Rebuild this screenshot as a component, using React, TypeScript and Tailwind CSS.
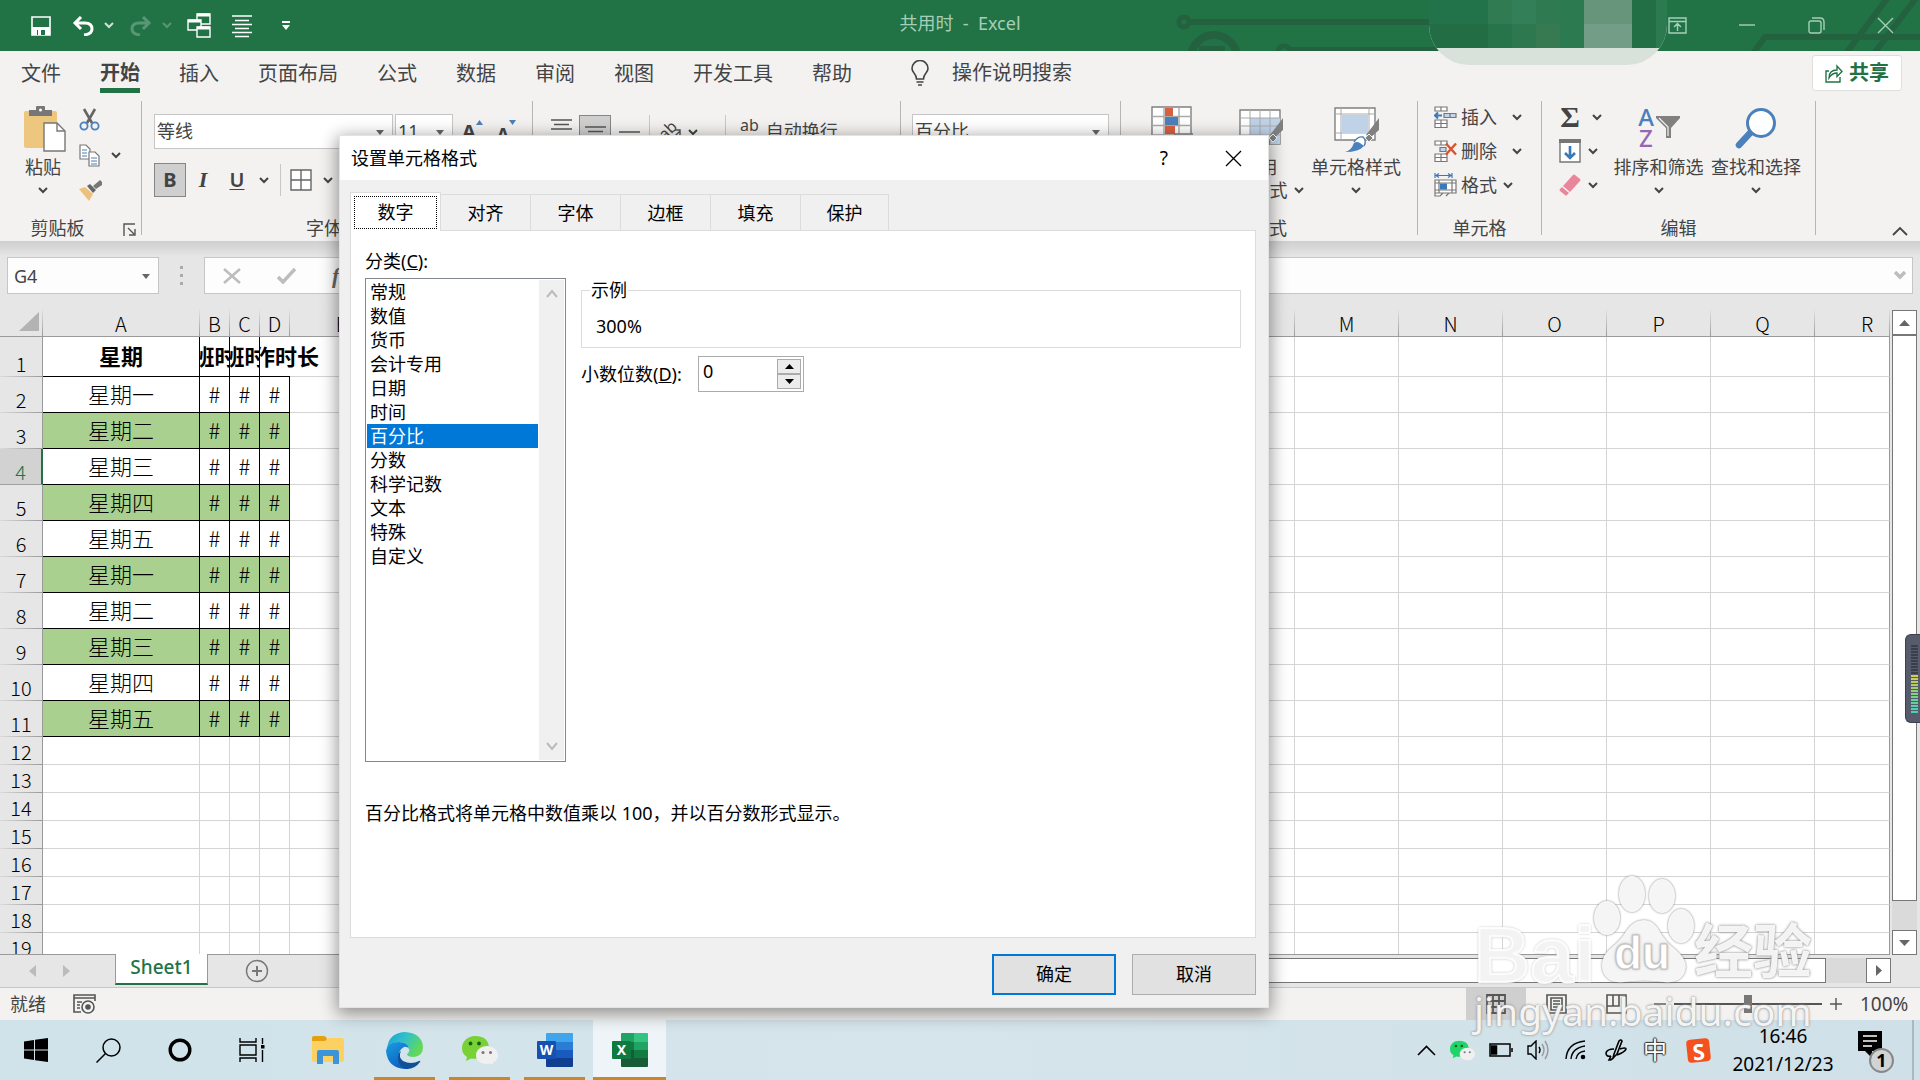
import { useState } from "react";
import type { ReactNode } from "react";

const tabs = ["文件", "开始", "插入", "页面布局", "公式", "数据", "审阅", "视图", "开发工具", "帮助"];
const dialogTabs = ["数字", "对齐", "字体", "边框", "填充", "保护"];
const categories = [
  "常规",
  "数值",
  "货币",
  "会计专用",
  "日期",
  "时间",
  "百分比",
  "分数",
  "科学记数",
  "文本",
  "特殊",
  "自定义",
];
const days = ["星期一", "星期二", "星期三", "星期四", "星期五", "星期一", "星期二", "星期三", "星期四", "星期五"];
const columns = ["A", "B", "C", "D", "E", "F", "G", "H", "I", "J", "K", "L", "M", "N", "O", "P", "Q", "R"];
const emptyRows = [12, 13, 14, 15, 16, 17, 18, 19];
const meterColors = [
  "#3b3f4c", "#3b3f4c", "#3b3f4c", "#3b3f4c", "#3b3f4c", "#3b3f4c", "#3b3f4c", "#3b3f4c", "#3b3f4c", "#3b3f4c",
  "#d3cf4e", "#c9ce55", "#bdcc5c", "#b0cc63", "#a2cd6b", "#94cf76", "#85d082", "#78d08e", "#6bd19a", "#60d1a4",
  "#56d0ac", "#4fcfb3", "#49ceb9",
];

const colWidth = (name: string) => {
  if (name === "A") return "w-[157px]";
  if ("BCD".includes(name)) return "w-[30px]";
  if ("EMNOPQ".includes(name)) return "w-[104px]";
  if (name === "R") return "w-[75px]";
  return "";
};

const Chevron = ({ className = "text-[#444]" }: { className?: string }) => (
  <svg width="10" height="7" viewBox="0 0 10 7" className={"shrink-0 " + className}>
    <path d="M1 1l4 4 4-4" fill="none" stroke="currentColor" strokeWidth="2" />
  </svg>
);

const Triangle = () => (
  <svg width="8" height="5" viewBox="0 0 8 5" className="pointer-events-none absolute right-2 top-1/2 -mt-0.5">
    <path d="M0 0h8L4 5z" fill="#666" />
  </svg>
);

/* ---------- title bar ---------- */

const TitleBar = () => (
  <header className="relative flex h-[51px] shrink-0 items-center bg-[#217346] text-white">
    <svg className="absolute right-0 top-0" width="760" height="51" viewBox="1160 0 760 51" fill="none" stroke="#24623f">
      <circle cx="1184" cy="22" r="5" strokeWidth="5" />
      <path d="M1191 22h240" strokeWidth="6" />
      <circle cx="1214" cy="58" r="23" strokeWidth="8" />
      <path d="M1199 49h26" strokeWidth="6" />
      <circle cx="1284" cy="52" r="6" strokeWidth="5" />
      <path d="M1288 49h150" strokeWidth="4" />
      <path d="M1754 52l11-15h155M1847 52l42-56M1875 52l45-59" strokeWidth="6" />
    </svg>
    <div className="flex items-center pl-[31px]">
      <button aria-label="保存">
        <svg width="20" height="20" viewBox="0 0 20 20">
          <path d="M1 1h18v18H1z" fill="none" stroke="#fff" strokeWidth="1.6" />
          <path d="M1 11h18v8H1z" fill="#fff" />
          <path d="M6 14h8v5H6z" fill="#217346" />
          <path d="M7 14h3v5H7z" fill="#fff" />
        </svg>
      </button>
      <button aria-label="撤消" className="ml-[21px] flex items-center gap-[10px]">
        <svg width="22" height="20" viewBox="0 0 22 20" fill="none" stroke="#fff" strokeWidth="3">
          <path d="M9 1L3 7l6 6M3 7h10q7 0 7 6 0 5-8 6" />
        </svg>
        <Chevron className="text-[#cfe3d7]" />
      </button>
      <button aria-label="恢复" className="ml-[16px] flex items-center gap-[10px] opacity-25">
        <svg width="22" height="20" viewBox="0 0 22 20" fill="none" stroke="#fff" strokeWidth="3">
          <path d="M13 1l6 6-6 6M19 7H9q-7 0-7 6 0 5 8 6" />
        </svg>
        <Chevron className="text-white" />
      </button>
      <button aria-label="切换窗口" className="ml-[15px]">
        <svg width="24" height="25" viewBox="0 0 24 25" fill="#217346" stroke="#fff" strokeWidth="1.4">
          <path d="M10 1h13v10H10z" />
          <path d="M10 2h13" strokeWidth="3" />
          <path d="M1 7h13v10H1z" />
          <path d="M1 8h13" strokeWidth="3" />
          <path d="M10 14h13v10H10z" />
          <path d="M10 15h13" strokeWidth="3" />
        </svg>
      </button>
      <button aria-label="居中" className="ml-[21px]">
        <svg width="20" height="24" viewBox="0 0 20 24" stroke="#fff" strokeWidth="1.4">
          <path d="M0 2h20M3 6.500h14M0 10.500h20M3 14.500h14M0 18.500h20M3 22.500h14" />
        </svg>
      </button>
      <button aria-label="自定义快速访问工具栏" className="ml-[30px]">
        <svg width="8" height="9" viewBox="0 0 8 9">
          <path d="M0 0h8v2H0zM0 4h8L4 9z" fill="#fff" />
        </svg>
      </button>
    </div>
    <h1 className="absolute inset-x-0 top-[11px] text-center text-[18px] leading-6 text-[#a6cfb8]">
      <span className="whitespace-pre">共用时  -  Excel</span>
    </h1>
    <div className="absolute right-[253px] top-0 z-10 h-[65px] w-[238px] overflow-hidden rounded-b-[40px] bg-[#d8e2db]">
      <div className="grid h-[48px] grid-cols-[59px_24px_24px_24px_24px_48px_24px_11px] grid-rows-2">
        <i className="bg-[#23734a]" /><i className="bg-[#317b52]" /><i className="bg-[#337f57]" /><i className="bg-[#2f7a50]" />
        <i className="bg-[#2b7a50]" /><i className="bg-[#66957b]" /><i className="bg-[#226f45]" /><i className="bg-[#2b7a50]" />
        <i className="bg-[#226d43]" /><i className="bg-[#27734a]" /><i className="bg-[#2e7850]" /><i className="bg-[#377a52]" />
        <i className="bg-[#2b7a50]" /><i className="bg-[#749d87]" /><i className="bg-[#226f45]" /><i className="bg-[#2b7a50]" />
      </div>
    </div>
    <div className="relative ml-auto flex items-center gap-[52px] pr-[26px] text-[#a6cfb8]">
      <button aria-label="功能区显示选项">
        <svg width="19" height="17" viewBox="0 0 19 17" fill="none" stroke="currentColor" strokeWidth="1.400">
          <path d="M1 1h17v15H1zM1 4.500h17M9.500 14V7M6 10l3.500-3.500L13 10" />
        </svg>
      </button>
      <button aria-label="最小化">
        <svg width="17" height="17" viewBox="0 0 17 17" stroke="currentColor" strokeWidth="1.400">
          <path d="M0 8h16" />
        </svg>
      </button>
      <button aria-label="还原">
        <svg width="17" height="17" viewBox="0 0 17 17" fill="none" stroke="currentColor" strokeWidth="1.400">
          <rect x="1" y="4" width="12" height="12" rx="2" />
          <path d="M4 1h8q4 0 4 4v8" />
        </svg>
      </button>
      <button aria-label="关闭">
        <svg width="17" height="17" viewBox="0 0 17 17" stroke="currentColor" strokeWidth="1.400">
          <path d="M1 1l15 15M16 1L1 16" />
        </svg>
      </button>
    </div>
  </header>
);

const RibbonTabs = () => (
  <nav className="flex h-[50px] shrink-0 items-start pl-[21px] pr-[18px] text-[20px] text-[#444]">
    <div className="flex gap-[39px]">
      {tabs.map((tab) => (
        <button
          key={tab}
          className={
            "h-[42px] pt-1 leading-[36px] " +
            (tab === "开始" ? "border-b-5 border-[#217346] font-bold" : "")
          }
        >
          {tab}
        </button>
      ))}
    </div>
    <button className="ml-[59px] flex h-[44px] items-center gap-[23px]">
      <svg width="18" height="26" viewBox="0 0 18 26" fill="none" stroke="#444" strokeWidth="1.600">
        <path d="M5.500 19q0-3-2.500-6Q1 10.500 1 8.500a8 8 0 0 1 16 0q0 2-2 4.500-2.500 3-2.500 6zM5.500 22h7M7 25h4" />
      </svg>
      操作说明搜索
    </button>
    <button className="ml-auto mt-1 flex h-[36px] w-[90px] items-center justify-center gap-[6px] rounded-[3px] border border-[#e1dfdd] bg-white font-bold text-[#217346]">
      <svg width="18" height="19" viewBox="0 0 18 19" fill="none" stroke="currentColor" strokeWidth="1.400">
        <path d="M4 7H1v11h14v-5M4 14q0-8 8-8V2l5 5.500-5 5V9q-5 0-8 5z" />
      </svg>
      共享
    </button>
  </nav>
);

/* ---------- ribbon ---------- */

const Group = ({ label, width, children, launcher }: { label: string; width: string; children: ReactNode; launcher?: boolean }) => (
  <>
    <section className={"flex shrink-0 flex-col " + width}>
      <div className="flex h-[117px]">{children}</div>
      <div className={"relative text-center leading-5 " + (launcher ? "pr-[26px]" : "")}>
        {label}
        {launcher && (
          <button aria-label={label + "设置"} className="absolute right-[5px] top-[5px]">
            <svg width="13" height="13" viewBox="0 0 13 13" fill="none" stroke="#555" strokeWidth="1.400">
              <path d="M1 13V1h11M5 5l6 6M12 6v6H6" />
            </svg>
          </button>
        )}
      </div>
    </section>
    <div className="h-[134px] w-px shrink-0 bg-[#b8b6b4]" />
  </>
);

const BigButton = ({ icon, lines, width }: { icon: ReactNode; lines: string[]; width: string }) => (
  <button className={"flex shrink-0 flex-col items-center pt-[5px] leading-5 " + width}>
    <span className="mb-[5px] h-[46px]">{icon}</span>
    <span className="whitespace-nowrap">{lines[0]}</span>
    <span className="mt-[3px] flex h-5 items-center gap-[6px] whitespace-nowrap">
      {lines[1]}
      <Chevron />
    </span>
  </button>
);

const Brush = () => (
  <>
    <path d="M46 12v12L37 32l-4-3z" fill="#808080" />
    <path d="M36 28l4 4-4 4-4-4z" fill="#808080" stroke="#f3f2f1" />
    <path d="M21 36q4-6 9-5 4 4 1 9" fill="#fff" stroke="#4a80bb" strokeWidth="1.400" />
    <path d="M12 46q6-1 9-9 3-2 6 0l4 3q-5 6-19 6z" fill="#4a80bb" />
  </>
);

const AlignLines = ({ d }: { d: string }) => (
  <svg width="21" height="22" viewBox="0 0 21 22" stroke="#555" strokeWidth="1.400">
    <path d={d} />
  </svg>
);

const ClipboardGroup = () => (
  <Group label="剪贴板" width="w-[141px]" launcher>
    <div className="ml-[19px] flex">
      <BigButton
        width="w-[48px]"
        lines={["粘贴"]}
        icon={
          <svg width="42" height="46" viewBox="0 0 42 46" className="ml-1">
            <rect x="0" y="5" width="33" height="37" rx="2" fill="#eec77e" />
            <path d="M5 10V4h7V1q0-1 1-1h7q1 0 1 1v3h7v6z" fill="#777" />
            <circle cx="16.500" cy="4" r="1.500" fill="#fff" />
            <path d="M20 17h13l8 8v20H20z" fill="#fff" stroke="#777" strokeWidth="1.400" />
            <path d="M33 17v8h8" fill="none" stroke="#777" strokeWidth="1.400" />
          </svg>
        }
      />
    </div>
    <div className="ml-[12px] flex flex-col gap-[13px] pt-[7px]">
      <button aria-label="剪切">
        <svg width="21" height="23" viewBox="0 0 21 23" fill="none">
          <path d="M5 1l8 14M16 1L8 15" stroke="#666" strokeWidth="2.600" />
          <circle cx="5" cy="18" r="3.600" stroke="#4a80bb" strokeWidth="1.800" />
          <circle cx="16" cy="18" r="3.600" stroke="#4a80bb" strokeWidth="1.800" />
        </svg>
      </button>
      <button aria-label="复制" className="flex items-center gap-[11px]">
        <svg width="21" height="23" viewBox="0 0 21 23" fill="#fff" stroke="#777" strokeWidth="1.200">
          <path d="M1 1h6l4 4v10H1z" />
          <path d="M10 8h6l4 4v10H10z" />
          <path d="M3 6h5M3 9h5M3 12h5M12 14h6M12 17h6M12 20h6" stroke="#4a80bb" />
        </svg>
        <Chevron />
      </button>
      <button aria-label="格式刷">
        <svg width="23" height="21" viewBox="0 0 23 21">
          <path d="M0 9l6-2 8 7-4 7z" fill="#eec07d" />
          <path d="M8 6l3-2 6 6-3 3z" fill="#666" />
          <path d="M14 6l7-6 2 2v3l-6 4z" fill="#777" />
        </svg>
      </button>
    </div>
  </Group>
);

const FontGroup = () => (
  <Group label="字体" width="w-[390px]" launcher>
    <div className="pl-[12px] pt-[13px]">
      <div className="flex gap-[2px]">
        <label className="relative h-[35px] w-[239px] border border-[#c6c6c6] bg-white">
          <select aria-label="字体" className="h-full w-full appearance-none px-0.5 text-[18px] text-[#444]">
            <option>等线</option>
          </select>
          <Triangle />
        </label>
        <label className="relative h-[35px] w-[58px] border border-[#c6c6c6] bg-white">
          <select aria-label="字号" className="h-full w-full appearance-none px-0.5 text-[18px] text-[#444]">
            <option>11</option>
          </select>
          <Triangle />
        </label>
        <button aria-label="增大字号" className="ml-[7px] mt-1 flex h-7 text-[20px] font-bold leading-7">
          A
          <svg width="7" height="5" viewBox="0 0 7 5" className="mt-0.5">
            <path d="M0 5h7L3.500 0z" fill="#4a80bb" />
          </svg>
        </button>
        <button aria-label="减小字号" className="ml-[12px] mt-1 flex h-7 text-[18px] font-bold leading-8">
          A
          <svg width="7" height="5" viewBox="0 0 7 5" className="mt-0.5">
            <path d="M0 0h7L3.500 5z" fill="#4a80bb" />
          </svg>
        </button>
      </div>
      <div className="mt-[14px] flex h-[34px] items-center">
        <button className="h-[34px] w-[32px] border border-[#868686] bg-[#cfcfcf] text-[20px] font-bold leading-[28px]">B</button>
        <button className="ml-[10px] w-[14px] font-['Liberation_Serif',serif] text-[22px] font-bold italic leading-[28px]">I</button>
        <button className="ml-[18px] w-[18px] text-[20px] font-semibold leading-[28px] underline decoration-1 underline-offset-2">U</button>
        <button aria-label="下划线样式" className="ml-[13px]"><Chevron /></button>
        <div className="ml-[11px] h-8 w-px bg-[#c9c7c5]" />
        <button aria-label="边框" className="ml-[9px] flex items-center gap-[11px]">
          <svg width="22" height="22" viewBox="0 0 22 22" fill="#fff" stroke="#666" strokeWidth="1.400">
            <path d="M1 1h20v20H1zM11 1v20M1 11h20" />
          </svg>
          <Chevron />
        </button>
      </div>
    </div>
  </Group>
);

const AlignGroup = () => (
  <Group label="对齐方式" width="w-[367px]">
    <div className="flex h-[48px] items-start pl-[12px] pt-[14px]">
      <button aria-label="顶端对齐" className="flex h-[34px] w-[32px] justify-center pt-1"><AlignLines d="M0 1h21M3 5.500h15M0 10h21" /></button>
      <button aria-label="垂直居中" className="ml-[2px] flex h-[34px] w-[32px] items-center justify-center border border-[#868686] bg-[#cfcfcf]"><AlignLines d="M0 6h21M3 10.500h15M0 15h21" /></button>
      <button aria-label="底端对齐" className="ml-[2px] flex h-[34px] w-[32px] items-end justify-center"><AlignLines d="M0 5h21M3 9.500h15M0 14h21" /></button>
      <div className="ml-[4px] h-8 w-px bg-[#c9c7c5]" />
      <button aria-label="方向" className="ml-[10px] flex h-[34px] items-center gap-[8px]">
        <span className="relative block h-6 w-[20px]">
          <span className="absolute -left-0.5 top-0 -rotate-45 text-[16px] leading-5">ab</span>
          <svg className="absolute left-[9px] top-[8px]" width="12" height="14" viewBox="0 0 12 14" fill="none" stroke="#555" strokeWidth="1.500">
            <path d="M1 13L11 3M6 2h5v5" />
          </svg>
        </span>
        <Chevron />
      </button>
      <div className="ml-[27px] h-8 w-px bg-[#c9c7c5]" />
      <button className="ml-[14px] flex h-[34px] items-start gap-[7px] leading-[32px]">
        <span className="text-[16px] leading-5">ab</span>自动换行
      </button>
    </div>
  </Group>
);

const InsertIcon = () => (
  <svg width="23" height="22" viewBox="0 0 23 22" fill="#fff" stroke="#777" strokeWidth="1.200">
    <path d="M1 1h12v4H1zM7 1v4M1 14h12v7.500H1zM7 14v7.500M1 17.500h12" />
    <path d="M10 7.500h12v4H10zM16 7.500v4" fill="#c3d5ea" />
    <path d="M8 9.500H1M4 6.500l-3 3 3 3" fill="none" stroke="#3a79b7" strokeWidth="2" />
  </svg>
);

const DeleteIcon = () => (
  <svg width="23" height="22" viewBox="0 0 23 22" fill="#fff" stroke="#777" strokeWidth="1.200">
    <path d="M1 1h12v4H1zM7 1v4M1 14h12v7.500H1zM7 14v7.500M1 17.500h12" />
    <path d="M6 7.500h6v4H6z" fill="#c3d5ea" />
    <path d="M12 3.500l10 11M22 3.500l-10 11" stroke="#d9532c" strokeWidth="2.400" />
  </svg>
);

const FormatIcon = () => (
  <svg width="23" height="24" viewBox="0 0 23 24" fill="#fff" stroke="#777" strokeWidth="1.200">
    <path d="M1 7h21v13H1zM1 10h21M1 17h21M5 7v13M18 7v13M1 20v3h5l3-3M12 23l3-3" />
    <path d="M6 10.500h7v6H6z" fill="#3a79b7" stroke="none" />
    <path d="M1 0v5M18 0v5M2 2.500h15M5 .5l-3 2 3 2M14 .5l3 2-3 2" fill="none" stroke="#3a79b7" />
  </svg>
);

const Ribbon = () => (
  <div className="flex h-[140px] shrink-0 text-[18px] text-[#444]">
    <ClipboardGroup />
    <FontGroup />
    <AlignGroup />
    <Group label="数字" width="w-[219px]">
      <div className="pl-[11px] pt-[13px]">
        <label className="relative block h-[35px] w-[197px] border border-[#c6c6c6] bg-white">
          <select aria-label="数字格式" className="h-full w-full appearance-none px-0.5 text-[18px] text-[#444]">
            <option>百分比</option>
          </select>
          <Triangle />
        </label>
      </div>
    </Group>
    <Group label="样式" width="w-[296px]">
      <div className="flex pl-[8px]">
        <BigButton
          width="w-[86px]"
          lines={["条件格式"]}
          icon={
            <svg width="42" height="46" viewBox="0 0 42 46" fill="#fff" stroke="#808080" strokeWidth="1.400">
              <path d="M1 1h39v38H1z" />
              <path d="M13 1v38M28 1v38M1 10.500h39M1 19.500h39M1 29h39" stroke="#aaa" />
              <path d="M14 2h8v8h-8zM14 20h10v8H14z" fill="#d9603f" stroke="none" />
              <path d="M14 11h13v8H14zM14 30h5v8h-5z" fill="#4a80bb" stroke="none" />
              <path d="M24 28h20v17H24z" />
            </svg>
          }
        />
        <BigButton
          width="w-[89px]"
          lines={["套用", "表格格式"]}
          icon={
            <svg width="46" height="46" viewBox="0 0 46 46">
              <path d="M3 4h40v34H3z" fill="#fff" stroke="#808080" strokeWidth="1.400" />
              <path d="M13 12h30v26H13z" fill="#bfd2e8" />
              <path d="M3 12h40M3 20h40M3 29h40M13 4v34M23 4v34M33 4v34" stroke="#aaa" />
              <Brush />
            </svg>
          }
        />
        <div className="ml-[6px]">
          <BigButton
            width="w-[92px]"
            lines={["单元格样式"]}
            icon={
              <svg width="46" height="46" viewBox="0 0 46 46">
                <path d="M2 2h40v32H2z" fill="#fff" stroke="#808080" strokeWidth="1.400" />
                <path d="M2 8h40M2 27h40M8 2v32M36 2v32" stroke="#aaa" />
                <path d="M9 9h26v18H9z" fill="#bfd2e8" />
                <Brush />
              </svg>
            }
          />
        </div>
      </div>
    </Group>
    <Group label="单元格" width="w-[123px]">
      <div className="-mt-px pl-[16px]">
        <button className="flex h-[34px] items-center gap-[4px]"><InsertIcon />插入<Chevron className="ml-[11px] text-[#444]" /></button>
        <button className="flex h-[34px] items-center gap-[4px]"><DeleteIcon />删除<Chevron className="ml-[11px] text-[#444]" /></button>
        <button className="flex h-[34px] items-center gap-[4px]"><FormatIcon />格式<Chevron className="ml-[2px] text-[#444]" /></button>
      </div>
    </Group>
    <Group label="编辑" width="w-[273px]">
      <div className="-mt-px w-[71px] pl-[17px]">
        <button aria-label="自动求和" className="flex h-[34px] items-center gap-[11px]">
          <span className="w-[22px] text-center font-['Liberation_Serif',serif] text-[30px] font-bold leading-[34px]">Σ</span>
          <Chevron />
        </button>
        <button aria-label="填充" className="flex h-[34px] items-center gap-[7px]">
          <svg width="22" height="24" viewBox="0 0 22 24">
            <path d="M1 1h20v22H1z" fill="#fff" stroke="#777" strokeWidth="1.400" />
            <path d="M0 0h22v4H0z" fill="#777" />
            <path d="M11 7v12M6 14l5 5 5-5" fill="none" stroke="#3a79b7" strokeWidth="2.600" />
          </svg>
          <Chevron />
        </button>
        <button aria-label="清除" className="flex h-[34px] items-center gap-[7px]">
          <svg width="22" height="22" viewBox="0 0 22 22" fill="#e8879b">
            <path d="M14 1q1-1 2 0l5 4q1 1 0 2L11 18l-7-6z" />
            <path d="M3 13l7 6-2 2q-1 1-2 0l-5-4q-1-1 0-2z" />
          </svg>
          <Chevron />
        </button>
      </div>
      <BigButton
        width="w-[91px]"
        lines={["排序和筛选"]}
        icon={
          <span className="flex">
            <span className="flex w-[17px] flex-col text-center text-[24px] font-medium leading-[21px]">
              <span className="text-[#4a80bb]">A</span>
              <span className="text-[#9467b5]">Z</span>
            </span>
            <svg width="25" height="40" viewBox="0 0 25 40" fill="none">
              <path d="M1 10h24v2l-9 10v10h-5V22L1 12z" fill="#808080" />
              <path d="M4 12l9 9v9" stroke="#f3f2f1" strokeWidth="1.200" />
            </svg>
          </span>
        }
      />
      <div className="ml-[6px]">
        <BigButton
          width="w-[92px]"
          lines={["查找和选择"]}
          icon={
            <svg width="42" height="44" viewBox="0 0 42 44">
              <path d="M16 26L4 39" stroke="#4a80bb" strokeWidth="6.500" strokeLinecap="round" />
              <circle cx="26" cy="17" r="13.500" fill="#fff" stroke="#4a80bb" strokeWidth="3" />
            </svg>
          }
        />
      </div>
    </Group>
    <div className="flex flex-1 items-end justify-end pb-[5px] pr-[12px]">
      <button aria-label="折叠功能区">
        <svg width="16" height="10" viewBox="0 0 16 10" fill="none" stroke="#444" strokeWidth="1.800">
          <path d="M1 9l7-7 7 7" />
        </svg>
      </button>
    </div>
  </div>
);

/* ---------- formula bar and sheet ---------- */

const FormulaBar = () => (
  <div className="flex h-[68px] shrink-0 items-start bg-[#e6e6e6] bg-linear-to-b from-[#cfcfcf] to-[#e6e6e6] to-[16px] pl-[7px] pr-[7px] pt-4">
    <div className="relative h-[37px] w-[152px] border border-[#c6c6c6] bg-[#fdfdfd]">
      <input aria-label="名称框" defaultValue="G4" className="h-full w-full px-1.5 text-[18px] text-[#444] outline-none" />
      <Triangle />
    </div>
    <div className="flex h-[37px] w-[45px] flex-col items-center justify-center gap-[5px]">
      <i className="size-[3px] bg-[#aaa]" />
      <i className="size-[3px] bg-[#aaa]" />
      <i className="size-[3px] bg-[#aaa]" />
    </div>
    <div className="flex h-[37px] flex-1 items-center border border-[#c6c6c6] bg-[#fdfdfd] pl-[18px] pr-[6px]">
      <button aria-label="取消">
        <svg width="18" height="16" viewBox="0 0 18 16" stroke="#bdbdbd" strokeWidth="2.500">
          <path d="M1 1l16 14M17 1L1 15" />
        </svg>
      </button>
      <button aria-label="输入" className="ml-[36px]">
        <svg width="19" height="16" viewBox="0 0 19 16" fill="none" stroke="#bdbdbd" strokeWidth="3.500">
          <path d="M1 9l5 5L18 1" />
        </svg>
      </button>
      <button className="ml-[36px] font-['Liberation_Serif',serif] text-[22px] font-bold italic text-[#666]">fx</button>
      <input aria-label="编辑栏" className="h-full flex-1 px-2 text-[18px] outline-none" />
      <button aria-label="展开编辑栏">
        <svg width="12" height="9" viewBox="0 0 12 9" fill="none" stroke="#bdbdbd" strokeWidth="3.500">
          <path d="M1 1l5 5 5-5" />
        </svg>
      </button>
    </div>
  </div>
);

const RowHead = ({ n }: { n: number }) => (
  <th
    scope="row"
    className={
      "border-b p-0 align-bottom text-[20px] font-light leading-[24px] " +
      (n === 4
        ? "border-r-2 border-b-[#a0a0a0] border-r-[#217346] bg-[#d2d2d2] text-[#217346]"
        : "border-r bg-[#e6e6e6] [border-image:linear-gradient(to_right,#dcdcdc,#999)_1]")
    }
  >
    {n}
  </th>
);

const BlankCells = ({ from }: { from: number }) => (
  <>
    {columns.slice(from).map((c) => (
      <td key={c} className="border-b border-r border-[#d4d4d4] p-0 last:border-r-[#999]" />
    ))}
  </>
);

const Sheet = () => (
  <div className="min-w-0 flex-1 overflow-hidden border-b border-[#999]">
    <table className="w-full table-fixed border-separate border-spacing-0 bg-white text-black [font-family:'Noto_Sans_CJK_SC',sans-serif]">
      <thead>
        <tr className="h-[28px] bg-[#e6e6e6]">
          <th className="w-[43px] border-b border-r p-0 align-bottom [border-image:linear-gradient(#e6e6e6,#999)_1]">
            <svg width="21" height="20" viewBox="0 0 21 20" className="mb-1 ml-[19px]">
              <path d="M20 0v19H0z" fill="#b3b3b3" />
            </svg>
          </th>
          {columns.map((c) => (
            <th
              key={c}
              className={
                "overflow-hidden border-b border-r p-0 align-bottom text-[20px] font-light leading-[24px] [border-image:linear-gradient(#e6e6e6,#999)_1] " +
                colWidth(c)
              }
            >
              <div className={c === "R" ? "w-[104px]" : ""}>{c}</div>
            </th>
          ))}
        </tr>
      </thead>
      <tbody>
        <tr className="h-[40px] text-[22px] font-bold leading-[28px]">
          <RowHead n={1} />
          <td className="border-b border-r border-black p-0 pb-[3px] text-center">星期</td>
          <td className="border-b border-r border-black p-0 pb-[3px]">
            <div className="flex justify-center overflow-hidden whitespace-nowrap"><span>上班时间</span></div>
          </td>
          <td className="border-b border-r border-black p-0 pb-[3px]">
            <div className="flex justify-center overflow-hidden whitespace-nowrap"><span>下班时间</span></div>
          </td>
          <td className="border-b border-b-black p-0 pb-[3px] [clip-path:inset(0_-60px_0_0)]">
            <div className="flex justify-center whitespace-nowrap"><span>工作时长</span></div>
          </td>
          <BlankCells from={4} />
        </tr>
        {days.map((day, i) => (
          <tr key={i} className="h-[36px] text-[22px] font-light leading-[28px]">
            <RowHead n={i + 2} />
            {[day, "#", "#", "#"].map((text, k) => (
              <td
                key={k}
                className={"border-b border-r border-black p-0 pb-[3px] text-center " + (i % 2 ? "bg-[#a9d08e]" : "bg-white")}
              >
                {text}
              </td>
            ))}
            <BlankCells from={4} />
          </tr>
        ))}
        {emptyRows.map((n) => (
          <tr key={n} className="h-[28px]">
            <RowHead n={n} />
            <BlankCells from={0} />
          </tr>
        ))}
      </tbody>
    </table>
  </div>
);

const VerticalScroll = () => (
  <div className="flex w-[30px] shrink-0 flex-col bg-[#e6e6e6] pl-[2px] pr-[3px] pt-px">
    <button aria-label="向上滚动" className="flex h-[25px] items-center justify-center border border-[#777] bg-white">
      <svg width="11" height="6" viewBox="0 0 11 6"><path d="M0 6h11L5.500 0z" fill="#666" /></svg>
    </button>
    <div className="flex-1 border border-[#777] bg-white" />
    <div className="h-[29px] bg-[#dadada]" />
    <button aria-label="向下滚动" className="flex h-[25px] items-center justify-center border border-[#777] bg-white">
      <svg width="11" height="6" viewBox="0 0 11 6"><path d="M0 0h11L5.500 6z" fill="#666" /></svg>
    </button>
  </div>
);

const SheetTabs = () => (
  <div className="flex h-[33px] shrink-0 items-start border-b border-[#c6c6c6] bg-[#e6e6e6] pr-[29px]">
    <div className="flex h-[31px] w-[115px] items-center gap-[27px] pl-[29px]">
      <svg width="7" height="12" viewBox="0 0 7 12"><path d="M7 0v12L0 6z" fill="#bbb" /></svg>
      <svg width="7" height="12" viewBox="0 0 7 12"><path d="M0 0v12l7-6z" fill="#bbb" /></svg>
    </div>
    <button className="relative -mt-px h-[31px] w-[93px] border-x border-b-2 border-x-[#999] border-b-[#217346] bg-white pb-1 text-[19px] font-medium leading-[24px] text-[#217346]">
      Sheet1
    </button>
    <button aria-label="新工作表" className="ml-[37px] mt-[4px]">
      <svg width="24" height="24" viewBox="0 0 24 24" fill="none" stroke="#777">
        <circle cx="12" cy="12" r="10.500" strokeWidth="1.400" />
        <path d="M12 7v10M7 12h10" strokeWidth="2" />
      </svg>
    </button>
    <div className="ml-auto mt-[3px] flex h-[25px] w-[690px]">
      <div className="flex-1 border border-[#777] bg-white" />
      <div className="w-[40px] bg-[#dadada]" />
      <button aria-label="向右滚动" className="flex w-[25px] items-center justify-center border border-[#777] bg-white">
        <svg width="6" height="11" viewBox="0 0 6 11"><path d="M0 0v11l6-5.500z" fill="#666" /></svg>
      </button>
    </div>
  </div>
);

const StatusBar = () => (
  <div className="flex h-[32px] shrink-0 items-center bg-[#f3f2f1] pl-[10px] pr-[12px] text-[18px] text-[#444]">
    <span>就绪</span>
    <svg className="ml-[27px]" width="23" height="20" viewBox="0 0 23 20" fill="none" stroke="#555" strokeWidth="1.600">
      <path d="M8 18H1V1h21v6M1 4h21M4 8h5M4 11h3M4 14h3" />
      <circle cx="15" cy="13" r="6" />
      <circle cx="15" cy="13" r="2" fill="#555" />
    </svg>
    <div className="ml-auto flex h-full items-center">
      <button aria-label="普通" className="flex h-full w-[60px] items-center justify-center bg-[#cfcfcf]">
        <svg width="20" height="20" viewBox="0 0 20 20" fill="none" stroke="#555" strokeWidth="1.800">
          <path d="M1 1h18v18H1zM7 1v18M13 1v18M1 7h18M1 13h18" />
        </svg>
      </button>
      <button aria-label="页面布局" className="flex h-full w-[60px] items-center justify-center">
        <svg width="21" height="20" viewBox="0 0 21 20" fill="none" stroke="#555" strokeWidth="1.600">
          <path d="M1 1h19v18H1zM5 4h11v12H5zM7 7h7M7 10h7M7 13h7" />
        </svg>
      </button>
      <button aria-label="分页预览" className="flex h-full w-[60px] items-center justify-center">
        <svg width="21" height="20" viewBox="0 0 21 20" fill="none" stroke="#555" strokeWidth="1.600">
          <path d="M1 1h19v18H1zM1 12h12V1M7 1v11" />
        </svg>
      </button>
      <button aria-label="缩小" className="ml-[8px]">
        <svg width="12" height="12" viewBox="0 0 12 12" stroke="#555" strokeWidth="1.400"><path d="M0 6h12" /></svg>
      </button>
      <input
        type="range"
        aria-label="显示比例"
        defaultValue={50}
        className="ml-[8px] h-[18px] w-[148px] appearance-none bg-[linear-gradient(#555,#555)] bg-[length:100%_2px] bg-center bg-no-repeat [&::-webkit-slider-thumb]:h-[18px] [&::-webkit-slider-thumb]:w-[8px] [&::-webkit-slider-thumb]:appearance-none [&::-webkit-slider-thumb]:bg-[#777]"
      />
      <button aria-label="放大" className="ml-[8px]">
        <svg width="12" height="12" viewBox="0 0 12 12" stroke="#555" strokeWidth="1.400"><path d="M0 6h12M6 0v12" /></svg>
      </button>
      <span className="ml-[18px] w-[48px] text-[19px]">100%</span>
    </div>
  </div>
);

/* ---------- format cells dialog ---------- */

const FormatDialog = () => {
  const [category, setCategory] = useState("百分比");
  const [decimals, setDecimals] = useState("0");

  return (
    <div
      role="dialog"
      aria-label="设置单元格格式"
      className="absolute left-[339px] top-[135px] z-20 w-[930px] border border-[#e3e3e3] bg-[#f0f0f0] text-[18px] text-black shadow-[0_4px_16px_2px_rgba(0,0,0,0.4)]"
    >
      <div className="flex h-[44px] items-center bg-white pl-[11px] pr-[26px]">
        <h2>设置单元格格式</h2>
        <button className="ml-auto text-[19px]">?</button>
        <button aria-label="关闭" className="ml-[57px]">
          <svg width="17" height="17" viewBox="0 0 17 17" stroke="#000" strokeWidth="1.300">
            <path d="M1 1l15 15M16 1L1 16" />
          </svg>
        </button>
      </div>
      <div className="pb-[12px] pl-[10px] pr-[12px] pt-[12px]">
        <div role="tablist" className="flex h-[38px] items-end">
          {dialogTabs.map((tab, i) =>
            i === 0 ? (
              <button key={tab} role="tab" aria-selected className="relative -mb-px h-[39px] w-[91px] border border-b-0 border-[#dcdcdc] bg-white p-[3px]">
                <span className="block border border-dotted border-black leading-[31px]">{tab}</span>
              </button>
            ) : (
              <button key={tab} role="tab" className="h-[36px] w-[90px] border-r border-t border-[#dcdcdc] leading-[34px] last:w-[88px]">
                {tab}
              </button>
            ),
          )}
        </div>
        <div className="flex h-[708px] flex-col border border-[#dcdcdc] bg-white px-[14px] pt-[18px]">
          <div className="flex gap-[15px]">
            <div className="w-[201px]">
              <p id="category-label" className="h-[29px] leading-6">分类(<u>C</u>):</p>
              <div className="flex h-[484px] border border-[#828790] p-px">
                <ul role="listbox" aria-labelledby="category-label" className="flex-1">
                  {categories.map((name) => (
                    <li
                      key={name}
                      role="option"
                      aria-selected={name === category}
                      onClick={() => setCategory(name)}
                      className={"h-6 pl-[3px] leading-[25px] " + (name === category ? "bg-[#0078d7] text-white" : "")}
                    >
                      {name}
                    </li>
                  ))}
                </ul>
                <div className="ml-px flex w-[25px] flex-col items-center justify-between bg-[#f0f0f0] py-[9px]">
                  <svg width="12" height="9" viewBox="0 0 12 9" fill="none" stroke="#bbb" strokeWidth="2"><path d="M1 8l5-6 5 6" /></svg>
                  <svg width="12" height="9" viewBox="0 0 12 9" fill="none" stroke="#bbb" strokeWidth="2"><path d="M1 1l5 6 5-6" /></svg>
                </div>
              </div>
            </div>
            <div className="flex-1 pt-[29px]">
              <fieldset className="h-[70px] border border-[#dcdcdc] px-[8px]">
                <legend className="px-px leading-6">示例</legend>
                <p className="pl-[6px] pt-[12px] leading-6">300%</p>
              </fieldset>
              <div className="mt-[8px] flex h-[36px]">
                <label htmlFor="decimals" className="w-[117px] leading-9">小数位数(<u>D</u>):</label>
                <div className="flex w-[106px] border border-[#ababab] p-[2px]">
                  <input
                    id="decimals"
                    value={decimals}
                    onChange={(e) => setDecimals(e.target.value)}
                    className="h-[24px] min-w-0 flex-1 px-0.5 outline-none"
                  />
                  <div className="flex w-6 flex-col">
                    <button
                      aria-label="增加"
                      onClick={() => setDecimals(String(Number(decimals) + 1))}
                      className="flex flex-1 items-center justify-center border border-[#ababab] bg-[#ececec]"
                    >
                      <svg width="9" height="5" viewBox="0 0 9 5"><path d="M0 5h9L4.500 0z" /></svg>
                    </button>
                    <button
                      aria-label="减少"
                      onClick={() => setDecimals(String(Math.max(0, Number(decimals) - 1)))}
                      className="flex flex-1 items-center justify-center border border-[#ababab] bg-[#ececec]"
                    >
                      <svg width="9" height="5" viewBox="0 0 9 5"><path d="M0 0h9L4.500 5z" /></svg>
                    </button>
                  </div>
                </div>
              </div>
            </div>
          </div>
          <p className="mt-[39px] leading-6">百分比格式将单元格中数值乘以 100，并以百分数形式显示。</p>
        </div>
        <div className="mt-[16px] flex justify-end gap-[16px]">
          <button className="h-[41px] w-[124px] border-2 border-[#0078d7] bg-[#e1e1e1]">确定</button>
          <button className="h-[41px] w-[124px] border border-[#adadad] bg-[#e1e1e1]">取消</button>
        </div>
      </div>
    </div>
  );
};

/* ---------- task bar ---------- */

const WeChat = ({ size, tint }: { size: number; tint: string }) => (
  <svg width={size} height={size} viewBox="0 0 36 36">
    <path d="M13 4C6 4 0 9 0 16q0 6 5 9l-1 4 5-2.500q14 2 18-7.500Q28 4 13 4z" fill={tint} />
    <circle cx="8.500" cy="11.500" r="1.900" fill="#1d5b1d" />
    <circle cx="17" cy="11.500" r="1.900" fill="#1d5b1d" />
    <path d="M25 14c-6 0-11 4-11 9.500S19 32 25 32l3-.5 3 1v-2q5-2.500 5-7c0-5.500-5-9.500-11-9.500z" fill="#f0f0f0" />
    <circle cx="21" cy="20.500" r="1.500" fill="#777" />
    <circle cx="28.500" cy="20.500" r="1.500" fill="#777" />
  </svg>
);

const TaskItem = ({ label, running, active, children }: { label: string; running?: boolean; active?: boolean; children: ReactNode }) => (
  <button
    aria-label={label}
    className={
      "flex h-[60px] items-center justify-center border-b-3 pt-[3px] " +
      (active ? "w-[73px] bg-[#eef4f7] " : running ? "mr-[14px] w-[61px] " : "w-[72px] ") +
      (active || running ? "border-[#c8872d]" : "border-transparent")
    }
  >
    {children}
  </button>
);

const Taskbar = () => (
  <footer className="flex h-[60px] shrink-0 bg-[#d5e5ec] bg-linear-to-r from-[#d0e3ea] via-[#d6e5eb] to-[#cfe0e8] text-black">
    <div className="flex">
      <TaskItem label="开始">
        <svg width="24" height="24" viewBox="0 0 24 24">
          <path d="M0 3.500L10 2v9.500H0zM11 1.800L24 0v11.500H11zM0 12.500h10V22L0 20.500zM11 12.500h13V24l-13-1.800z" />
        </svg>
      </TaskItem>
      <TaskItem label="搜索">
        <svg width="25" height="25" viewBox="0 0 25 25" fill="none" stroke="#000" strokeWidth="1.500">
          <circle cx="15.500" cy="9.500" r="8.500" />
          <path d="M9.500 15.500L.5 24.500" />
        </svg>
      </TaskItem>
      <TaskItem label="Cortana">
        <svg width="24" height="24" viewBox="0 0 24 24" fill="none" stroke="#000">
          <circle cx="12" cy="12" r="9.800" strokeWidth="3.400" />
        </svg>
      </TaskItem>
      <TaskItem label="任务视图">
        <svg width="26" height="24" viewBox="0 0 26 24" fill="none" stroke="#000" strokeWidth="1.400">
          <path d="M1 0v4h16V0M1 24v-4h16v4M1 7h16v10H1zM23.500 0v6M23.500 12v12" />
          <path d="M22 7h3.500v3.500H22z" fill="#000" stroke="none" />
        </svg>
      </TaskItem>
      <div className="ml-[4px] flex gap-[10px]">
        <TaskItem label="文件资源管理器">
          <svg width="32" height="28" viewBox="0 0 32 28">
            <path d="M0 2q0-2 2-2h10q2 0 3 3l1 4H0z" fill="#e2a10e" />
            <path d="M0 5h13l3-3h14q2 0 2 2v20q0 2-2 2H2q-2 0-2-2z" fill="#fdd161" />
            <path d="M5 16q0-2 2-2h18q2 0 2 2v12h-6v-8H11v8H5z" fill="#3c95d8" />
          </svg>
        </TaskItem>
        <TaskItem label="Microsoft Edge" running>
          <svg width="37" height="37" viewBox="0 0 37 37">
            <defs>
              <linearGradient id="edgeTop" x1="0" x2="1" y2=".5">
                <stop offset="0" stopColor="#1c9de0" />
                <stop offset=".5" stopColor="#2fc2c8" />
                <stop offset="1" stopColor="#63d957" />
              </linearGradient>
              <linearGradient id="edgeLeft" x1="0" x2=".6" y2="1">
                <stop offset="0" stopColor="#1b9de2" />
                <stop offset="1" stopColor="#0b5fc0" />
              </linearGradient>
            </defs>
            <path d="M1 16Q3 1 18.500 0 36 1 37 15q0 9-9 10-7 0-7-3 3-2 2-6-2-6-9-6Q4 10 1 16z" fill="url(#edgeTop)" />
            <path d="M0 19q1-9 13-9 9 0 10 7-2-3-5-2-7 4-4 12 4 8 9 10Q2 38 0 19z" fill="url(#edgeLeft)" />
            <path d="M15 19q-3 6 2 10 8 4 16 0 2-1 1 1-5 7-13 7-9-2-9-11 0-5 3-7z" fill="#124f96" />
          </svg>
        </TaskItem>
      </div>
      <TaskItem label="微信" running>
        <WeChat size={36} tint="#78d135" />
      </TaskItem>
      <TaskItem label="Word" running>
        <svg width="36" height="34" viewBox="0 0 36 34">
          <path d="M9 1q0-1 1-1h25q1 0 1 1v8H9z" fill="#41a5ee" />
          <path d="M9 9h27v8H9z" fill="#2b7cd3" />
          <path d="M9 17h27v8H9z" fill="#185abd" />
          <path d="M9 25h27v8q0 1-1 1H10q-1 0-1-1z" fill="#103f91" />
          <rect x="0" y="8" width="19" height="18" rx="1" fill="#1650b0" />
          <text x="9.500" y="22" textAnchor="middle" fontSize="14" fontWeight="700" fill="#fff">W</text>
        </svg>
      </TaskItem>
      <div className="-ml-[6px]">
        <TaskItem label="Excel" active>
          <svg width="36" height="34" viewBox="0 0 36 34">
            <path d="M9 1q0-1 1-1h12v9H9z" fill="#21a366" />
            <path d="M22 0h13q1 0 1 1v8H22z" fill="#33c481" />
            <path d="M9 9h13v8H9zM22 17h14v8H22z" fill="#107c41" />
            <path d="M22 9h14v8H22z" fill="#21a366" />
            <path d="M9 17h13v8h14v8q0 1-1 1H10q-1 0-1-1z" fill="#185c37" />
            <rect x="0" y="8" width="19" height="18" rx="1" fill="#0f7a40" />
            <text x="9.500" y="22" textAnchor="middle" fontSize="14" fontWeight="700" fill="#fff">X</text>
          </svg>
        </TaskItem>
      </div>
    </div>
    <div className="ml-auto flex items-center gap-[14px]">
      <button aria-label="显示隐藏的图标">
        <svg width="19" height="11" viewBox="0 0 19 11" fill="none" stroke="#000" strokeWidth="1.600"><path d="M1 10l8.500-8.500L18 10" /></svg>
      </button>
      <WeChat size={25} tint="#1fd568" />
      <svg width="24" height="14" viewBox="0 0 24 14" fill="none" stroke="#000" strokeWidth="1.500">
        <path d="M1 1h20v12H1zM23 5v4" />
        <path d="M2.500 3h5v8h-5z" fill="#000" />
      </svg>
      <svg width="24" height="20" viewBox="0 0 24 20" fill="none" stroke="#000" strokeWidth="1.400">
        <path d="M1 6h3l5-5v18l-5-5H1zM12 7q2 3 0 6" />
        <path d="M15 4q4 6 0 12M18 1q6 9 0 18" stroke="#999" />
      </svg>
      <svg width="22" height="20" viewBox="0 0 22 20" fill="none" stroke="#000" strokeWidth="1.400">
        <path d="M1 19Q2 3 20 1M6 19Q7 8 20 6M11 19q1-7 9-8" />
        <circle cx="18" cy="17" r="1.600" fill="#000" />
      </svg>
      <svg width="22" height="22" viewBox="0 0 22 22" fill="none" stroke="#000" strokeWidth="1.600" className="ml-1">
        <path d="M9 15L14 2q2-2 3 0l-5 13-4 4zM9 10q-7 0-8 4 0 4 5 3M15 10q6-2 6 0-1 3-9 6M6 17l-2 4q3 0 5-3" />
      </svg>
      <span className="ml-0.5 w-[24px] text-[24px] leading-[30px] text-white [text-shadow:1px_0_1px_#333,-1px_0_1px_#333,0_1px_1px_#333,0_-1px_1px_#333]">中</span>
      <span className="ml-1.5 flex size-[23px] -rotate-6 items-center justify-center rounded-[4px] bg-[#f4511e] text-[22px] font-bold leading-6 text-white">S</span>
      <div className="ml-1.5 w-[106px] text-center text-[19px] leading-7">
        <div>16:46</div>
        <div>2021/12/23</div>
      </div>
      <button aria-label="通知" className="relative ml-[8px] mr-[18px]">
        <svg width="36" height="46" viewBox="0 0 36 46">
          <path d="M0 4h24v20h-10v7l-7-7H0z" />
          <path d="M5 9h14M5 14h14M5 19h9" stroke="#fff" strokeWidth="1.400" />
        </svg>
        <span className="absolute bottom-0 right-0 flex size-[25px] items-center justify-center rounded-full border-2 border-[#888] bg-[#d0d4d6] text-[18px] font-bold">
          1
        </span>
      </button>
      <div className="-ml-[14px] mr-[6px] h-[60px] w-[2px] bg-[#a9b9c2]" />
    </div>
  </footer>
);

/* ---------- overlays ---------- */

const VolumeMeter = () => (
  <div className="absolute right-0 top-[634px] z-20 flex h-[89px] w-[15px] flex-col gap-px rounded-l-md border border-r-0 border-[#3c404d] bg-[#575c6c] pl-[5px] pt-[10px]">
    {meterColors.map((color, i) => (
      <i key={i} className="h-[2px] w-[7px] shrink-0" style={{ backgroundColor: color }} />
    ))}
  </div>
);

const Watermark = () => (
  <div className="pointer-events-none absolute bottom-[38px] right-[100px] z-30 h-[168px] w-[346px] text-white/90 [text-shadow:0_0_3px_#888,0_0_1px_#aaa]">
    <div className="absolute left-0 top-[36px] font-['Liberation_Sans',sans-serif] text-[78px] font-bold leading-[90px] [-webkit-text-stroke:2px_#ffffffe6]">Bai</div>
    <svg className="absolute left-[118px] top-0 drop-shadow-[0_0_1px_#777]" width="106" height="112" viewBox="0 0 106 112" fill="#ffffffeb">
      <ellipse cx="15" cy="44" rx="13" ry="17" />
      <ellipse cx="40" cy="20" rx="13" ry="18" />
      <ellipse cx="70" cy="22" rx="13" ry="17" />
      <ellipse cx="89" cy="52" rx="13" ry="17" />
      <path d="M52 46q10 0 16 12 6 10 16 18 14 12 8 24-6 10-20 8-20-3-40 0-16 2-21-10-4-14 8-24 10-8 16-18 7-10 17-10z" />
    </svg>
    <div className="absolute left-[140px] top-[54px] font-['Liberation_Sans',sans-serif] text-[46px] font-bold leading-[50px] text-white [-webkit-text-stroke:1px_#c4c4c4]">du</div>
    <div className="absolute left-[220px] top-[40px] text-[59px] font-bold leading-[72px]">经验</div>
    <div className="absolute left-0 top-[112px] text-[39px] leading-[50px]">jingyan.baidu.com</div>
  </div>
);

const App = () => (
  <div className="relative flex h-screen flex-col overflow-hidden bg-[#f3f2f1] [font-family:'Noto_Sans','Noto_Sans_CJK_SC',sans-serif]">
    <TitleBar />
    <RibbonTabs />
    <Ribbon />
    <FormulaBar />
    <main className="flex min-h-0 flex-1">
      <Sheet />
      <VerticalScroll />
    </main>
    <SheetTabs />
    <StatusBar />
    <Taskbar />
    <FormatDialog />
    <VolumeMeter />
    <Watermark />
  </div>
);

export default App;
